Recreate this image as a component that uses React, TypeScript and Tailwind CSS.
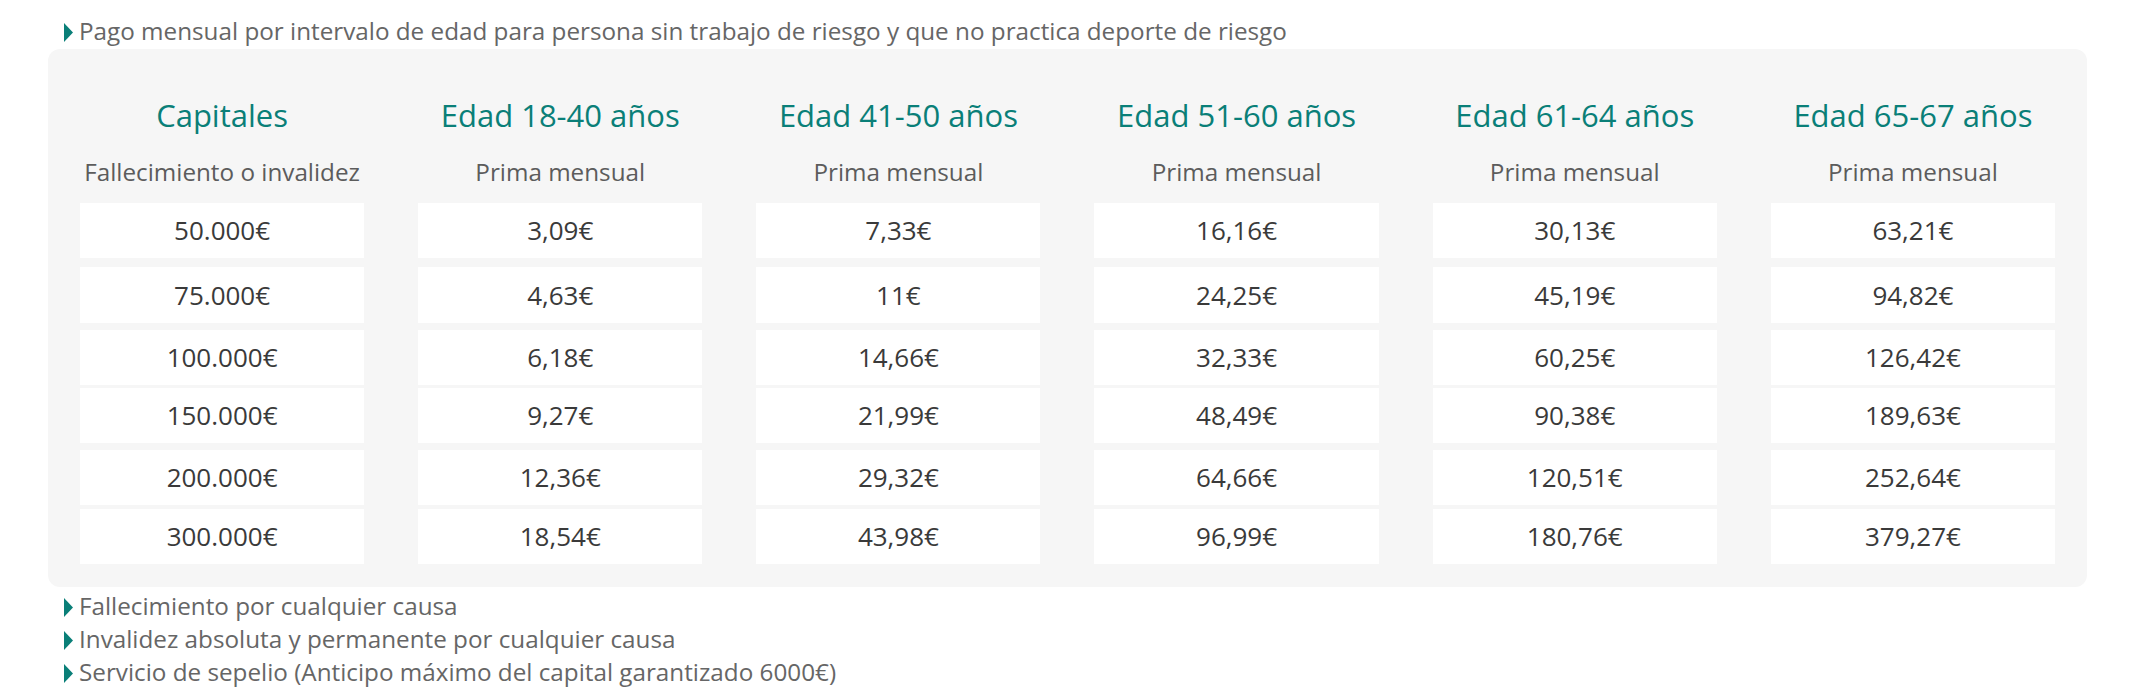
import React from "react";

const headers = [
  { title: "Capitales", sub: "Fallecimiento o invalidez" },
  { title: "Edad 18-40 años", sub: "Prima mensual" },
  { title: "Edad 41-50 años", sub: "Prima mensual" },
  { title: "Edad 51-60 años", sub: "Prima mensual" },
  { title: "Edad 61-64 años", sub: "Prima mensual" },
  { title: "Edad 65-67 años", sub: "Prima mensual" },
];

const rows: { mt: string; h: string; cells: string[] }[] = [
  { mt: "mt-0", h: "h-[55px]", cells: ["50.000€", "3,09€", "7,33€", "16,16€", "30,13€", "63,21€"] },
  { mt: "mt-[9px]", h: "h-[56px]", cells: ["75.000€", "4,63€", "11€", "24,25€", "45,19€", "94,82€"] },
  { mt: "mt-[7px]", h: "h-[55px]", cells: ["100.000€", "6,18€", "14,66€", "32,33€", "60,25€", "126,42€"] },
  { mt: "mt-[3px]", h: "h-[55px]", cells: ["150.000€", "9,27€", "21,99€", "48,49€", "90,38€", "189,63€"] },
  { mt: "mt-[7px]", h: "h-[55px]", cells: ["200.000€", "12,36€", "29,32€", "64,66€", "120,51€", "252,64€"] },
  { mt: "mt-[4px]", h: "h-[55px]", cells: ["300.000€", "18,54€", "43,98€", "96,99€", "180,76€", "379,27€"] },
];

function Arrow() {
  return (
    <svg width="9" height="19" viewBox="0 0 9 19" className="mr-[6px] mt-[4px] shrink-0">
      <polygon points="0,0 9,9.5 0,19" fill="#0a7f78" />
    </svg>
  );
}

function Bullet({ children }: { children: React.ReactNode }) {
  return (
    <div className="flex items-center text-[24.25px] leading-[33px] text-[#666666]">
      <Arrow />
      <span>{children}</span>
    </div>
  );
}

export default function App() {
  return (
    <div className="w-[2140px] h-[694px] bg-white font-['Open_Sans',sans-serif] overflow-hidden">
      <div className="pl-[64px] pt-[14px]">
        <Bullet>
          Pago mensual por intervalo de edad para persona sin trabajo de riesgo y que no practica deporte de riesgo
        </Bullet>
      </div>
      <div className="ml-[48px] mt-[2px] w-[2039px] rounded-[12px] bg-[#f6f6f6] pl-[32px] pr-[32px] pt-[46px] pb-[23px]">
        <div className="grid grid-cols-6 gap-x-[54px]">
          {headers.map((h) => (
            <div key={h.title} className="text-center text-[31px] leading-[40px] text-[#0a7f78]">
              {h.title}
            </div>
          ))}
        </div>
        <div className="mt-[20px] grid grid-cols-6 gap-x-[54px]">
          {headers.map((h, i) => (
            <div key={i} className="text-center text-[24.25px] leading-[33px] text-[#5c5c5c]">
              {h.sub}
            </div>
          ))}
        </div>
        <div className="mt-[15px]">
          {rows.map((r, ri) => (
            <div key={ri} className={`${r.mt} grid grid-cols-6 gap-x-[54px]`}>
              {r.cells.map((c, ci) => (
                <div
                  key={ci}
                  className={`${r.h} flex items-center justify-center bg-white text-[26px] text-[#3a3a3a]`}
                >
                  {c}
                </div>
              ))}
            </div>
          ))}
        </div>
      </div>
      <div className="pl-[64px] pt-[2px]">
        <Bullet>Fallecimiento por cualquier causa</Bullet>
        <Bullet>Invalidez absoluta y permanente por cualquier causa</Bullet>
        <Bullet>Servicio de sepelio (Anticipo máximo del capital garantizado 6000€)</Bullet>
      </div>
    </div>
  );
}
